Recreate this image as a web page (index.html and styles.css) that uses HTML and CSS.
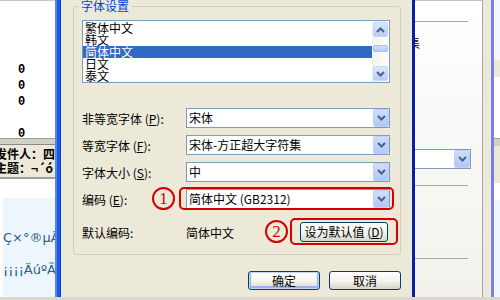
FILE: index.html
```html
<!DOCTYPE html>
<html lang="zh-CN">
<head>
    <meta charset="UTF-8">
    <title>字体设置</title>
    <link rel="stylesheet" href="styles.css">
</head>
<body>
    <div class="screen">
        <div class="windows">
            <!-- mail window behind the dialog -->
            <div class="mail">
                <div class="mail-body">
                    <div>0</div>
                    <div>0</div>
                    <div>0</div>
                    <div>&nbsp;</div>
                    <div>0</div>
                </div>
                <div class="mail-sep"></div>
                <div class="mail-head">
                    <div>发件人：四</div>
                    <div>主题：¬´ó</div>
                </div>
                <div class="mail-gap"></div>
                <div class="mail-text">
                    <p>Ç×°®µÄÅ</p>
                    <p>¡¡¡¡ÄúºÃ£</p>
                </div>
            </div>

            <div class="frame-left"></div>

            <div class="dialog">
                <fieldset class="group">
                    <legend>字体设置</legend>

                    <div class="listbox">
                        <ul class="list-items">
                            <li>繁体中文</li>
                            <li>韩文</li>
                            <li class="selected">简体中文</li>
                            <li>日文</li>
                            <li>泰文</li>
                        </ul>
                        <div class="scrollbar">
                            <div class="sb-btn">
                                <svg width="9" height="6" viewBox="0 0 9 6"><polyline points="1,5 4.5,1.5 8,5" fill="none" stroke="#4D6185" stroke-width="2"/></svg>
                            </div>
                            <div class="sb-thumb"></div>
                            <div class="sb-btn sb-down">
                                <svg width="9" height="6" viewBox="0 0 9 6"><polyline points="1,1 4.5,4.5 8,1" fill="none" stroke="#4D6185" stroke-width="2"/></svg>
                            </div>
                        </div>
                    </div>

                    <div class="form">
                        <div class="row">
                            <span class="label">非等宽字体 (<u>P</u>):</span>
                            <div class="combo">
                                <span class="combo-text">宋体</span>
                                <span class="combo-btn"><svg width="9" height="6" viewBox="0 0 9 6"><polyline points="1,1 4.5,4.5 8,1" fill="none" stroke="#4D6185" stroke-width="2"/></svg></span>
                            </div>
                        </div>
                        <div class="row">
                            <span class="label">等宽字体 (<u>F</u>):</span>
                            <div class="combo">
                                <span class="combo-text">宋体-方正超大字符集</span>
                                <span class="combo-btn"><svg width="9" height="6" viewBox="0 0 9 6"><polyline points="1,1 4.5,4.5 8,1" fill="none" stroke="#4D6185" stroke-width="2"/></svg></span>
                            </div>
                        </div>
                        <div class="row">
                            <span class="label">字体大小 (<u>S</u>):</span>
                            <div class="combo">
                                <span class="combo-text">中</span>
                                <span class="combo-btn"><svg width="9" height="6" viewBox="0 0 9 6"><polyline points="1,1 4.5,4.5 8,1" fill="none" stroke="#4D6185" stroke-width="2"/></svg></span>
                            </div>
                        </div>
                        <div class="row">
                            <span class="label">编码 (<u>E</u>):</span>
                            <div class="combo annot annot-select">
                                <span class="num">1</span>
                                <span class="combo-text">简体中文 (GB2312)</span>
                                <span class="combo-btn"><svg width="9" height="6" viewBox="0 0 9 6"><polyline points="1,1 4.5,4.5 8,1" fill="none" stroke="#4D6185" stroke-width="2"/></svg></span>
                            </div>
                        </div>
                        <div class="row row-default">
                            <span class="label">默认编码:</span>
                            <div class="value">
                                <span>简体中文</span>
                                <div class="annot annot-btn">
                                    <span class="num">2</span>
                                    <button class="btn btn-small">设为默认值 (<u>D</u>)</button>
                                </div>
                            </div>
                        </div>
                    </div>
                </fieldset>

                <div class="actions">
                    <button class="btn btn-default">确定</button>
                    <button class="btn">取消</button>
                </div>
            </div>

            <div class="frame-right"></div>

            <!-- window on the right, partly hidden -->
            <div class="side">
                <div class="side-line"></div>
                <div class="side-glyph">集</div>
                <div class="side-combo">
                    <span class="combo-btn"><svg width="9" height="6" viewBox="0 0 9 6"><polyline points="1,1 4.5,4.5 8,1" fill="none" stroke="#4D6185" stroke-width="2"/></svg></span>
                </div>
                <div class="side-line side-line-2"></div>
                <div class="side-line side-line-3"></div>
            </div>
            <div class="gutter"></div>
            <div class="edge"></div>
            <div class="strip">
                <div class="strip-top"></div>
                <div class="strip-beige"></div>
                <div class="strip-white"></div>
                <div class="strip-sep"></div>
                <div class="strip-head"></div>
                <div class="strip-gap"></div>
                <div class="strip-text"></div>
            </div>
        </div>
        <div class="bottom-band"></div>
    </div>
</body>
</html>
```

FILE: styles.css
```css
* {
    box-sizing: border-box;
}
body {
    margin: 0;
    background: #ECE9D8;
    font-family: "Noto Sans CJK SC", "Liberation Sans", sans-serif;
    font-size: 12px;
    color: #000;
}
.screen {
    width: 500px;
    height: 300px;
    display: flex;
    flex-direction: column;
    overflow: hidden;
}
.windows {
    flex: 1;
    display: flex;
    min-height: 0;
}
.bottom-band {
    height: 3px;
    background: #D9D7CF;
}

/* mail window */
.mail {
    width: 55px;
    flex: none;
    display: flex;
    flex-direction: column;
    background: #fff;
    border-top: 1px solid #C8C8C8;
    overflow: hidden;
}
.mail-body {
    height: 137px;
    flex: none;
    padding: 61px 0 0 18px;
    font: bold 12px/16px "Liberation Mono", monospace;
    overflow: hidden;
}
.mail-sep {
    height: 7px;
    flex: none;
    background: #D4D0C8;
    border-top: 1px solid #A0A0A0;
    border-bottom: 1px solid #8A8A8A;
}
.mail-head {
    height: 34px;
    flex: none;
    background: #ECE9D8;
    border-bottom: 2px solid #9C9C9C;
    padding-top: 2px;
    margin-left: -5px;
    font-weight: bold;
    line-height: 14px;
    white-space: nowrap;
}
.mail-gap {
    height: 19px;
    flex: none;
}
.mail-text {
    flex: 1;
    margin-left: 3px;
    padding-top: 24px;
    background: #EEF6FD;
    color: #245E85;
    font: 13px/32px "DejaVu Sans", sans-serif;
    white-space: nowrap;
}
.mail-text p {
    margin: 0;
}

.frame-left {
    width: 6px;
    flex: none;
    background: linear-gradient(90deg, #5A84E6 0 2px, #1656E8 2px 5px, #0A45CF 5px);
}

/* dialog */
.dialog {
    width: 351px;
    flex: none;
    padding: 0 11px 0 12px;
    display: flex;
    flex-direction: column;
    background: #ECE9D8;
}
.group {
    margin: 0;
    min-width: 0;
    padding: 8px 10px 12px 8px;
    border: 1px solid #D0D0BF;
    border-radius: 3px;
}
.group legend {
    margin-left: -3px;
    padding: 0 2px;
    color: #0046D5;
    line-height: 12px;
}
.listbox {
    height: 63px;
    display: flex;
    border: 1px solid #7F9DB9;
    background: #fff;
}
.list-items {
    flex: 1;
    margin: 0;
    padding: 1px 0 0 0;
    list-style: none;
}
.list-items li {
    height: 12px;
    line-height: 12px;
    padding-left: 2px;
}
.list-items li.selected {
    background: #316AC5;
    color: #fff;
}
.scrollbar {
    width: 17px;
    display: flex;
    flex-direction: column;
    padding: 1px;
    background: linear-gradient(90deg, #F3F2EC, #FDFDFB);
}
.sb-btn {
    height: 15px;
    display: grid;
    place-items: center;
    border: 1px solid #C6D5FB;
    border-radius: 2px;
    background: linear-gradient(#DCE6FE, #B9CCF8);
}
.sb-thumb {
    height: 7px;
    margin-top: 8px;
    border: 1px solid #A9BEF0;
    border-radius: 2px;
    background: linear-gradient(#D4E0FC, #B7CAF5);
}
.sb-down {
    margin-top: auto;
}

.form {
    margin-top: 25px;
    display: flex;
    flex-direction: column;
    gap: 7px;
}
.row {
    height: 20px;
    display: flex;
    align-items: center;
}
.row-default {
    margin-top: 6px;
}
.label {
    width: 104px;
    flex: none;
    white-space: nowrap;
}
.combo {
    width: 205px;
    height: 20px;
    display: flex;
    align-items: stretch;
    padding: 0 0 0 2px;
    border: 1px solid #7F9DB9;
    background: #fff;
}
.combo-text {
    flex: 1;
    line-height: 18px;
    white-space: nowrap;
}
.combo-btn {
    width: 16px;
    flex: none;
    display: grid;
    place-items: center;
    border: 1px solid #BCD0F8;
    border-radius: 2px;
    background: linear-gradient(#CFDDFD, #B3C7F6);
}
.value {
    width: 205px;
    display: flex;
    align-items: center;
    justify-content: space-between;
    padding-right: 2px;
}

/* red annotation marks */
.annot {
    position: relative;
}
.annot::after {
    content: "";
    position: absolute;
    border: 2px solid #D40000;
    border-radius: 5px;
    pointer-events: none;
}
.annot-select::after {
    inset: -3px -5px -2px -8px;
}
.annot-btn::after {
    inset: -4px -10px -3px -10px;
}
.num {
    position: absolute;
    top: 50%;
    width: 23px;
    height: 23px;
    margin-top: -12px;
    border: 2px solid #D40000;
    border-radius: 50%;
    color: #D40000;
    font: 17px/19px "Liberation Serif", serif;
    text-align: center;
}
.annot-select .num {
    left: -35px;
}
.annot-btn .num {
    left: -35px;
}

.btn {
    padding: 0;
    border: 1px solid #003C74;
    border-radius: 3px;
    background: linear-gradient(#FFFFFF, #F3F2ED 55%, #D9D4CA);
    color: #000;
    font-family: "Noto Sans CJK SC", sans-serif;
    font-size: 12px;
    line-height: 12px;
}
.btn-small {
    display: block;
    width: 88px;
    height: 20px;
}
.actions {
    display: flex;
    justify-content: flex-end;
    gap: 9px;
    margin-top: 16px;
}
.actions .btn {
    width: 72px;
    height: 19px;
}
.btn-default {
    box-shadow: inset 0 0 0 1px #C4D6F8, inset 0 -1px 0 2px #98B4E8;
}

/* right hand windows */
.frame-right {
    width: 3px;
    flex: none;
    background: #0A1FA8;
}
.side {
    width: 68px;
    flex: none;
    display: flex;
    flex-direction: column;
    border-top: 1px solid #C4C4C4;
    border-right: 1px solid #A6A6A6;
    background: linear-gradient(#FFFFFF, #F2F1EC);
    overflow: hidden;
}
.side-line {
    width: 53px;
    height: 1px;
    flex: none;
    margin-top: 20px;
    background: #ABA9A0;
}
.side-glyph {
    margin: 15px 0 0 -7px;
    line-height: 12px;
}
.side-combo {
    width: 59px;
    height: 20px;
    flex: none;
    margin: 100px 0 0 -3px;
    display: flex;
    justify-content: flex-end;
    border: 1px solid #7F9DB9;
    background: #fff;
}
.side-line-2 {
    margin-top: 16px;
}
.side-line-3 {
    margin-top: 72px;
}
.gutter {
    width: 8px;
    flex: none;
    background: #ECE9D8;
}
.edge {
    width: 3px;
    flex: none;
    background: #7B7FE0;
}
.strip {
    flex: 1;
    display: flex;
    flex-direction: column;
}
.strip-top {
    height: 60px;
    background: #F4F7FE;
}
.strip-beige {
    height: 17px;
    background: #ECE9D8;
}
.strip-white {
    height: 61px;
    background: #FFFFFF;
}
.strip-sep {
    height: 8px;
    background: #D4D0C8;
    border-top: 1px solid #A0A0A0;
}
.strip-head {
    height: 37px;
    background: #ECE9D8;
}
.strip-gap {
    height: 17px;
    background: #FFFFFF;
}
.strip-text {
    flex: 1;
    background: #EEF6FD;
}
```
